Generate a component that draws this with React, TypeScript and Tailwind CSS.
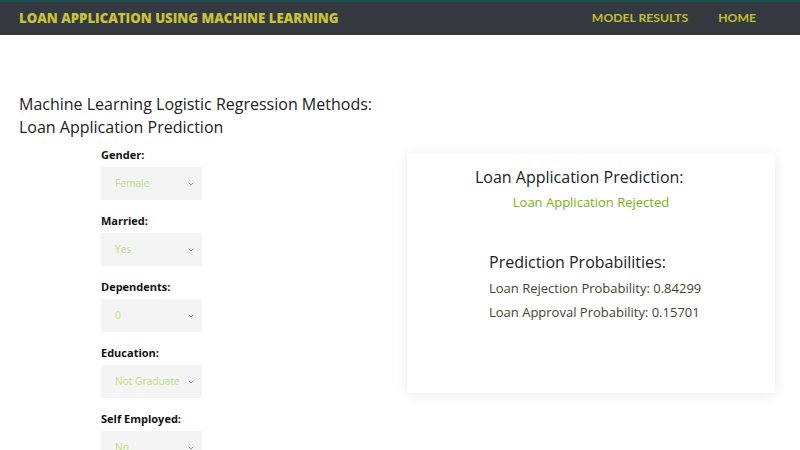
import { ChevronDown } from 'lucide-react'

const fields = [
    { label: 'Gender:', value: 'Female' },
    { label: 'Married:', value: 'Yes' },
    { label: 'Dependents:', value: '0' },
    { label: 'Education:', value: 'Not Graduate' },
    { label: 'Self Employed:', value: 'No' },
]

function Nav() {
    return (
        <nav className="h-[35px] bg-[#343a40] border-t-2 border-[#1d4e52] flex items-center justify-between px-[19px]">
            <span className="text-[13.2px] font-extrabold text-[#c9c337] font-['Open_Sans',sans-serif]">
                LOAN APPLICATION USING MACHINE LEARNING
            </span>
            <div className="flex gap-[30px] pr-[25px] text-[12.2px] font-bold text-[#c2bf2e] font-['Lato',sans-serif]">
                <span>MODEL RESULTS</span>
                <span>HOME</span>
            </div>
        </nav>
    )
}

function Select({ value }: { value: string }) {
    return (
        <div className="w-[101px] h-[33px] bg-[#f4f4f4] flex items-center justify-between pl-[14px] pr-[7px]">
            <span className="text-[10.2px] text-[#bfe07c]">{value}</span>
            <ChevronDown className="w-[8px] h-[8px] text-[#999]" strokeWidth={3} />
        </div>
    )
}

function App() {
    return (
        <div className="w-[800px] h-[450px] overflow-hidden bg-white font-['Open_Sans',sans-serif]">
            <Nav />
            <section className="px-[19px] pt-[58px]">
                <h1 className="text-[16px] leading-[23px] text-[#222]">
                    Machine Learning Logistic Regression Methods:<br />Loan Application Prediction
                </h1>
                <div className="flex mt-[9px]">
                    <div className="w-[388px] pl-[82px] flex flex-col gap-[14px]">
                        {fields.map((f) => (
                            <div key={f.label} className="flex flex-col gap-[5px]">
                                <label className="text-[11px] leading-[14px] font-bold text-[#111]">{f.label}</label>
                                <Select value={f.value} />
                            </div>
                        ))}
                    </div>
                    <div className="w-[368px] h-[240px] mt-[5px] bg-white shadow-[0_2px_14px_rgba(0,0,0,0.08)] flex flex-col">
                        <h2 className="pl-[68px] pt-[12px] text-[16px] text-[#222]">Loan Application Prediction:</h2>
                        <p className="text-center mt-[4px] text-[13px] text-[#7ab317]">Loan Application Rejected</p>
                        <div className="pl-[82px] mt-[37px]">
                            <h3 className="text-[16px] text-[#222]">Prediction Probabilities:</h3>
                            <p className="mt-[5px] text-[13px] text-[#45452f]">Loan Rejection Probability: 0.84299</p>
                            <p className="mt-[5px] text-[13px] text-[#45452f]">Loan Approval Probability: 0.15701</p>
                        </div>
                    </div>
                </div>
            </section>
        </div>
    )
}

export default App
